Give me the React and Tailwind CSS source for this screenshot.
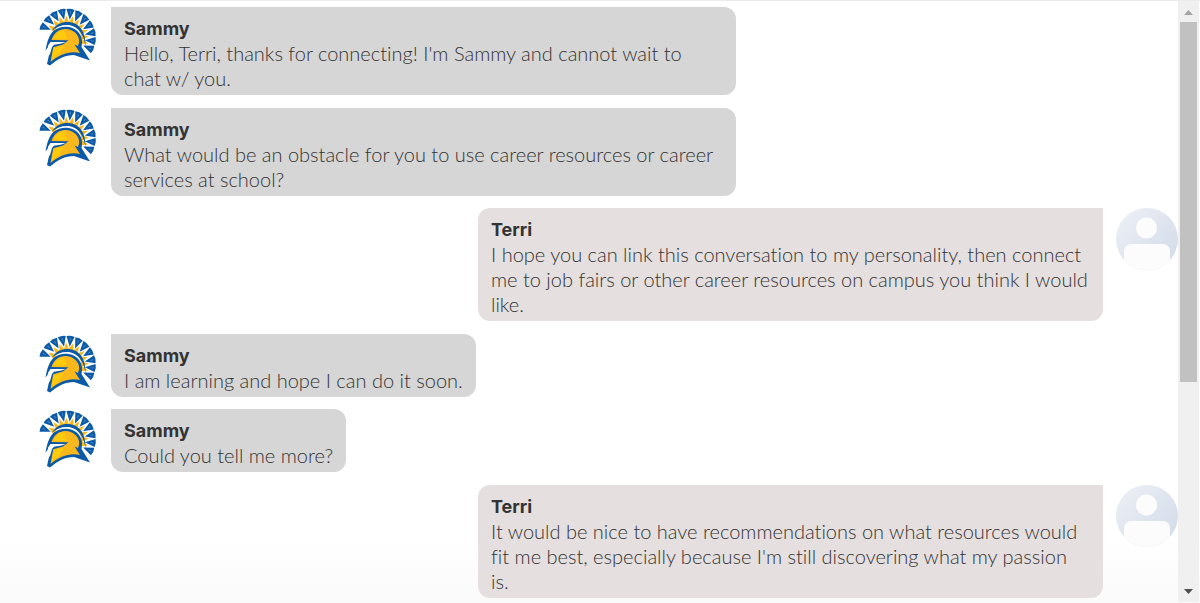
import React from 'react';

const messages = [
  { from: 'Sammy', text: "Hello, Terri, thanks for connecting! I'm Sammy and cannot wait to\nchat w/ you." },
  { from: 'Sammy', text: 'What would be an obstacle for you to use career resources or career\nservices at school?' },
  { from: 'Terri', text: 'I hope you can link this conversation to my personality, then connect\nme to job fairs or other career resources on campus you think I would\nlike.' },
  { from: 'Sammy', text: 'I am learning and hope I can do it soon.' },
  { from: 'Sammy', text: 'Could you tell me more?' },
  { from: 'Terri', text: "It would be nice to have recommendations on what resources would\nfit me best, especially because I'm still discovering what my passion\nis." },
];

// Plume feathers fan around the helmet, angles measured clockwise from straight up
const plume = [-66, -47, -29, -11, 7, 25, 43, 61, 79, 97, 115];

function SpartanLogo() {
  return (
    <svg viewBox="0 0 62 62" className="size-[62px] shrink-0" role="img" aria-label="Sammy">
      {plume.map((angle) => (
        <g key={angle} transform={`rotate(${angle} 31 30.5)`}>
          <path d="M27 2.2Q31 0.8 35.2 2.2L31.5 12.5Z" fill="#0b5aa8" />
          <path d="M30.5 3.8L32 4L31.5 7.5Z" fill="#4d88c2" />
        </g>
      ))}
      {plume.slice(0, -1).map((angle) => (
        <path key={angle} d="M31 8.5L34 16.5H28Z" fill="#fbb81c" transform={`rotate(${angle + 9} 31 30.5)`} />
      ))}
      {/* crest band */}
      <path d="M16 23.5C20 17 26 14.5 33 15C44 16 50 25 49.5 40C48.5 29 43 19.5 33 18C26 17.5 21 19.5 16 23.5Z" fill="#0b5aa8" />
      {/* helmet outline */}
      <path
        d="M9.5 43.5C11 35 13 28 18 23.5C22 20 28 19 33 20C41 21.5 46.5 28 46 36L45.5 40L54 53.5L38 48C29 48 22 52 14 58.5L11 57L14.5 41L12.5 39.5Z"
        fill="#0b5aa8"
      />
      <path
        d="M15.5 33C17.5 26.5 22 23 27 22.2C36 21 43.5 27 43.2 35L42 39L38.5 37.5L44 46C34 43.5 24 47 14.5 55L17.5 39L30 34Z"
        fill="#fbb81c"
      />
      <path d="M17.5 31.5C20 26 24 23.8 28 23.5L31 32ZM17.5 41.5L28 38L24 46L15.5 53Z" fill="#ffcb0a" />
      {/* eye slot */}
      <path d="M13 33.2H32.5L27 37.5L17 40.2L15 39Z" fill="#0b5aa8" />
      <path d="M12 38.8L14.5 35H29.5L25.5 36.5L18 37.8L16 40L14 47L11.5 50Z" fill="#fff" />
    </svg>
  );
}

function UserAvatar() {
  return (
    <svg viewBox="0 0 62 62" className="size-[62px] shrink-0" role="img" aria-label="Terri">
      <defs>
        <linearGradient id="avatar-bg" x1="0" y1="0" x2="1" y2="1">
          <stop offset="0" stopColor="#eef1f6" />
          <stop offset="1" stopColor="#d0d9e8" />
        </linearGradient>
        <clipPath id="avatar-clip">
          <circle cx="31" cy="31" r="31" />
        </clipPath>
      </defs>
      <g clipPath="url(#avatar-clip)">
        <rect width="62" height="62" fill="url(#avatar-bg)" />
        <circle cx="30.5" cy="20" r="10.5" fill="#fcfcfc" />
        <rect x="8" y="36" width="46" height="32" rx="7" fill="#fcfcfc" />
      </g>
    </svg>
  );
}

function Message({ from, text }) {
  const mine = from === 'Terri';
  return (
    <li className={`flex items-start gap-[13px] odd:mb-px ${mine ? 'justify-end' : ''}`}>
      {!mine && <SpartanLogo />}
      <div
        className={`max-w-[625px] px-[13px] pt-[9px] pb-1 ${
          mine ? 'rounded-l-xl rounded-br-xl bg-[#e5dfdf]' : 'rounded-r-xl rounded-bl-xl bg-[#d6d6d6]'
        } ${text.includes('\n') ? 'w-[625px]' : ''}`}
      >
        <h2 className="font-['Inter',sans-serif] text-[18px] font-bold leading-[25px]">{from}</h2>
        <p className="whitespace-pre-line font-light [font-variant-ligatures:none]">{text}</p>
      </div>
      {mine && <UserAvatar />}
    </li>
  );
}

function ScrollTrack() {
  return (
    <div className="mb-px flex w-[21px] shrink-0 flex-col items-center bg-[#f0f0f0] py-2">
      <svg viewBox="0 0 9 5" className="mt-px h-[5px] w-[9px] shrink-0" aria-hidden="true">
        <path d="M0 5L4.5 0L9 5Z" fill="#a3a3a3" />
      </svg>
      <div className="mt-[7px] h-8/13 w-[17px] bg-[#c1c1c1]" />
      <svg viewBox="0 0 9 5" className="mt-auto h-[5px] w-[9px] shrink-0" aria-hidden="true">
        <path d="M0 0H9L4.5 5Z" fill="#505050" />
      </svg>
    </div>
  );
}

export default function App() {
  return (
    <main className="flex h-screen overflow-hidden border-t border-[#ececec] bg-linear-to-b from-white from-90% to-[#fafafa] pr-px font-['Lato',sans-serif] text-[20px] leading-[25px] text-[#333]">
      <ul className="flex min-w-0 flex-1 flex-col gap-3 pt-[6px] pl-9">
        {messages.map((message) => (
          <Message key={message.text} {...message} />
        ))}
      </ul>
      <ScrollTrack />
    </main>
  );
}
